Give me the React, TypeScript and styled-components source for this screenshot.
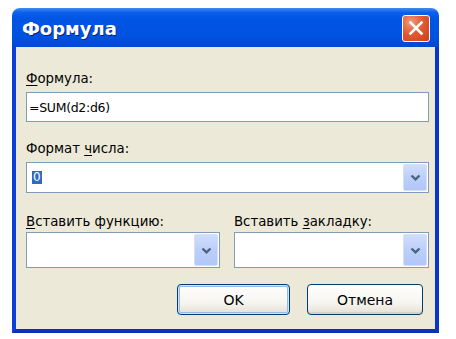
import styled, { createGlobalStyle } from 'styled-components';

const GlobalStyle = createGlobalStyle`
  html, body {
    margin: 0;
    padding: 0;
    background: #ffffff;
  }
  body {
    font-family: "DejaVu Sans", "Liberation Sans", sans-serif;
  }
`

const Window = styled.div`
  width: 427px;
  margin: 8px 0 0 12px;
  display: flex;
  flex-direction: column;
`

const TitleBar = styled.div`
  height: 39px;
  border-radius: 8px 8px 0 0;
  background: linear-gradient(to bottom, #3d8df5 0%, #0a5eeb 12%, #0054e3 30%, #0053e1 70%, #0148d0 100%);
  display: flex;
  align-items: center;
  justify-content: space-between;
  padding: 0 9px 0 10px;
`

const Title = styled.span`
  color: #ffffff;
  font-family: "DejaVu Sans", "Liberation Sans", sans-serif;
  font-weight: bold;
  font-size: 18px;
  text-shadow: 1px 1px 0 #0a1f80;
  margin-top: 2px;
`

const CloseBtn = styled.div`
  width: 28px;
  height: 27px;
  box-sizing: border-box;
  border: 1px solid #ffffff;
  border-radius: 3px;
  background: radial-gradient(circle at 30% 25%, #f19a7c 0%, #e25a32 45%, #c9401b 100%);
  display: flex;
  align-items: center;
  justify-content: center;
  margin-top: 1px;
`

const Body = styled.div`
  background: #ece9d8;
  border-left: 4px solid #0b3fd6;
  border-right: 4px solid #0a36c4;
  border-bottom: 4px solid #0a33b8;
  padding: 23px 6px 14px 10px;
  display: flex;
  flex-direction: column;
`

const Label = styled.div<{ $gap?: number }>`
  font-size: 13.3px;
  line-height: 17px;
  color: #000000;
  margin-bottom: ${p => p.$gap ?? 5}px;
  white-space: nowrap;
  & u {
    text-decoration: underline;
    text-underline-offset: 2px;
  }
`

const TextBox = styled.div`
  height: 30px;
  box-sizing: border-box;
  border: 1px solid #7f9db9;
  background: #ffffff;
  font-size: 12.5px;
  letter-spacing: -0.3px;
  display: flex;
  align-items: center;
  padding-left: 2px;
`

const Combo = styled.div<{ $h: number }>`
  height: ${p => p.$h}px;
  box-sizing: border-box;
  border: 1px solid #7f9db9;
  background: #ffffff;
  display: flex;
  align-items: center;
  justify-content: space-between;
  padding: 1px;
`

const Selected = styled.span`
  background: #316ac5;
  color: #ffffff;
  margin-left: 4px;
  line-height: 13px;
  font-size: 12px;
  padding: 0 1px;
`

const DropBtn = styled.div`
  width: 24px;
  height: 100%;
  box-sizing: border-box;
  border: 1px solid #d4e0fb;
  border-radius: 2px;
  background: linear-gradient(to bottom, #d0ddfc 0%, #bccff9 50%, #b2c7f7 100%);
  display: flex;
  align-items: center;
  justify-content: center;
  margin-left: auto;
`

const Section = styled.div<{ $top: number }>`
  margin-top: ${p => p.$top}px;
  display: flex;
  flex-direction: column;
`

const Row = styled.div`
  display: grid;
  grid-template-columns: 194px 195px;
  column-gap: 14px;
  margin-top: 20px;
`

const Buttons = styled.div`
  display: flex;
  justify-content: flex-end;
  gap: 17px;
  margin-top: 16px;
  padding-right: 6px;
`

const Button = styled.button<{ $w: number; $default?: boolean }>`
  width: ${p => p.$w}px;
  height: 31px;
  box-sizing: border-box;
  border: 1px solid #003c74;
  border-radius: 4px;
  background: linear-gradient(to bottom, #ffffff 0%, #f6f5f0 60%, #e3e1d6 100%);
  font-family: "DejaVu Sans", "Liberation Sans", sans-serif;
  font-size: 14px;
  color: #000000;
  padding: 0;
  box-shadow: ${p => p.$default
    ? 'inset 0 0 0 1px #cee7ff, inset 0 0 0 2px #98b8ea'
    : 'inset 0 -2px 0 #d6d0c5'};
`

const Chevron = () => (
  <svg width="11" height="7" viewBox="0 0 11 7">
    <path d="M1.5 1.5 L5.5 5.3 L9.5 1.5" fill="none" stroke="#4d6185" strokeWidth="2.4" />
  </svg>
)

const CloseX = () => (
  <svg width="16" height="16" viewBox="0 0 16 16">
    <path d="M2.5 2.5 L13.5 13.5 M13.5 2.5 L2.5 13.5" stroke="#ffffff" strokeWidth="2.6" strokeLinecap="square" />
  </svg>
)

export default function App() {
  return (
    <>
      <GlobalStyle />
      <Window>
        <TitleBar>
          <Title>Формула</Title>
          <CloseBtn><CloseX /></CloseBtn>
        </TitleBar>
        <Body>
          <Section $top={0}>
            <Label><u>Ф</u>ормула:</Label>
            <TextBox>=SUM(d2:d6)</TextBox>
          </Section>
          <Section $top={18}>
            <Label>Формат <u>ч</u>исла:</Label>
            <Combo $h={31}>
              <Selected>0</Selected>
              <DropBtn><Chevron /></DropBtn>
            </Combo>
          </Section>
          <Row>
            <Section $top={0}>
              <Label $gap={2}><u>В</u>ставить функцию:</Label>
              <Combo $h={36}><DropBtn><Chevron /></DropBtn></Combo>
            </Section>
            <Section $top={0}>
              <Label $gap={2}>Вставить <u>з</u>акладку:</Label>
              <Combo $h={36}><DropBtn><Chevron /></DropBtn></Combo>
            </Section>
          </Row>
          <Buttons>
            <Button $w={113} $default>OK</Button>
            <Button $w={116}>Отмена</Button>
          </Buttons>
        </Body>
      </Window>
    </>
  )
}
